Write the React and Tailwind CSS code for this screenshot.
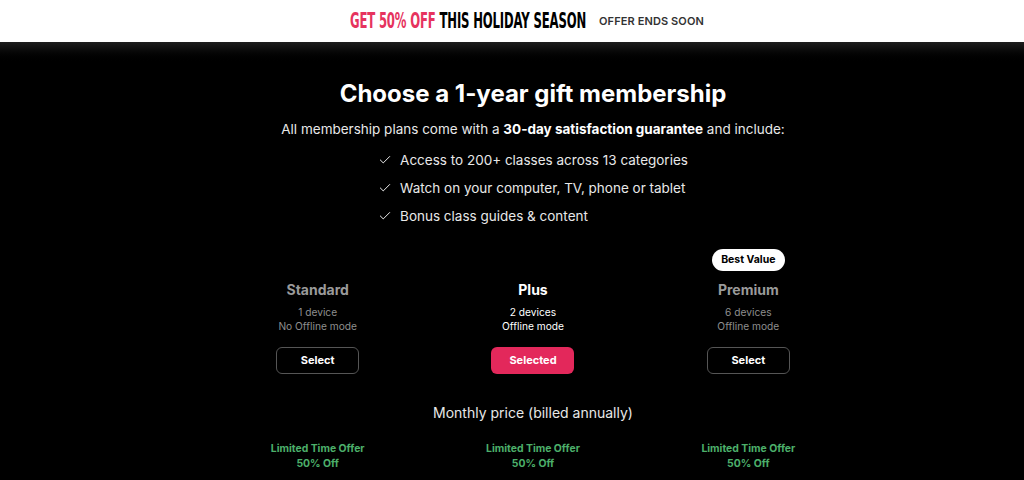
import React from 'react';
import { Check } from 'lucide-react';

const plans = [
  { name: 'Standard', devices: '1 device', offline: 'No Offline mode' },
  { name: 'Plus', devices: '2 devices', offline: 'Offline mode', selected: true },
  { name: 'Premium', devices: '6 devices', offline: 'Offline mode', badge: 'Best Value' },
];

const perks = [
  'Access to 200+ classes across 13 categories',
  'Watch on your computer, TV, phone or tablet',
  'Bonus class guides & content',
];

const App = () => {
  return (
    <div className="w-[1024px] h-[480px] overflow-hidden bg-black" style={{ fontFamily: 'Inter, "Noto Sans", sans-serif' }}>
      {/* Promo banner */}
      <div className="h-[42px] bg-white flex items-center justify-center pl-[30px] gap-[13px]">
        <div className="w-[236px] h-[24px] flex items-center">
          <div
            className="text-[22px] font-black tracking-[-0.3px] leading-none whitespace-nowrap origin-left scale-x-[0.53]"
            style={{ fontFamily: '"DejaVu Sans", "Liberation Sans", sans-serif' }}
          >
            <span className="text-[#e6335e]">GET 50% OFF</span>{' '}
            <span className="text-black">THIS HOLIDAY SEASON</span>
          </div>
        </div>
        <span className="text-[11px] font-semibold tracking-[0.01em] text-[#333]">OFFER ENDS SOON</span>
      </div>

      {/* Main */}
      <div className="bg-gradient-to-b from-[#1e1e1e] to-black to-[22px] flex flex-col items-center pl-[42px] pt-[34px]">
        <h1 className="text-[24px] font-bold text-white leading-[36px]">Choose a 1-year gift membership</h1>
        <p className="text-[13.5px] text-[#e8e8e8] mt-[6px] leading-[22px]">
          All membership plans come with a <span className="font-bold text-white">30-day satisfaction guarantee</span> and include:
        </p>
        <ul className="mt-[6px] flex flex-col">
          {perks.map((p) => (
            <li key={p} className="flex items-center gap-[8px] h-[28px] text-[13.5px] text-[#e8e8e8]">
              <Check className="w-[14px] h-[14px] text-white" strokeWidth={1.6} />
              {p}
            </li>
          ))}
        </ul>

        <div className="grid grid-cols-3 w-[646px] mt-[19px]">
          {plans.map((pl) => (
            <div key={pl.name} className="flex flex-col items-center">
              <div className="h-[22px] flex items-center">
                {pl.badge && (
                  <span className="bg-white text-black text-[10.5px] font-bold rounded-full px-[9px] h-[22px] flex items-center">
                    {pl.badge}
                  </span>
                )}
              </div>
              <div className={`mt-[10px] text-[14px] font-bold leading-[18px] ${pl.selected ? 'text-white' : 'text-[#9a9a9a]'}`}>
                {pl.name}
              </div>
              <div className={`mt-[6px] text-[10.2px] leading-[14px] text-center ${pl.selected ? 'text-white' : 'text-[#8e8e8e]'}`}>
                <div>{pl.devices}</div>
                <div>{pl.offline}</div>
              </div>
              <button
                className={`mt-[14px] w-[83px] h-[27px] rounded-md text-[11px] font-bold text-white ${
                  pl.selected ? 'bg-[#e3285b]' : 'border border-[#555] bg-black'
                }`}
              >
                {pl.selected ? 'Selected' : 'Select'}
              </button>
            </div>
          ))}
        </div>

        <div className="mt-[29px] text-[14px] text-[#e8e8e8] leading-[20px]">Monthly price (billed annually)</div>

        <div className="grid grid-cols-3 w-[646px] mt-[18px]">
          {plans.map((pl) => (
            <div key={pl.name} className="flex flex-col items-center text-[10.4px] font-bold text-[#4caf6a] leading-[15px]">
              <div>Limited Time Offer</div>
              <div>50% Off</div>
            </div>
          ))}
        </div>
      </div>
    </div>
  );
};

export default App;
